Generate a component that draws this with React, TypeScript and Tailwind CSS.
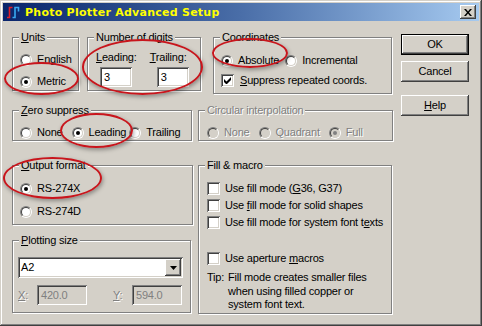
import type { ReactNode } from 'react';

const font = "font-['Liberation_Sans',Arial,sans-serif] text-[11px] leading-[13px] tracking-[-0.2px]";

// classic sunken 2px border (outer dark gray / white, inner black / face)
const sunken =
  'shadow-[inset_1px_1px_0_#808080,inset_-1px_-1px_0_#fff,inset_2px_2px_0_#404040,inset_-2px_-2px_0_#d4d0c8]';
const raised =
  'shadow-[inset_-1px_-1px_0_#404040,inset_1px_1px_0_#fff,inset_-2px_-2px_0_#808080]';

const Radio = ({ checked, disabled }: { checked?: boolean; disabled?: boolean }) => (
  <span className="relative inline-flex w-[12px] h-[12px] shrink-0 rounded-full border border-t-[#808080] border-l-[#808080] border-b-white border-r-white">
    <span
      className={`flex-1 flex items-center justify-center rounded-full border border-t-[#404040] border-l-[#404040] border-b-[#d4d0c8] border-r-[#d4d0c8] ${
        disabled ? 'bg-[#d4d0c8]' : 'bg-white'
      }`}
    >
      {checked && (
        <span className={`w-[4px] h-[4px] rounded-full ${disabled ? 'bg-[#808080]' : 'bg-black'}`} />
      )}
    </span>
  </span>
);

const Check = ({ checked }: { checked?: boolean }) => (
  <span className={`inline-flex w-[13px] h-[13px] shrink-0 bg-white items-center justify-center ${sunken}`}>
    {checked && (
      <svg width="7" height="7" viewBox="0 0 7 7">
        <path d="M0 2v3l2 2h1l4-4V0L2.5 4.5Z" fill="#000" />
      </svg>
    )}
  </span>
);

const U = ({ children }: { children: ReactNode }) => <span className="underline underline-offset-[1px]">{children}</span>;

const Group = ({
  title,
  className,
  children,
  disabled,
}: {
  title: ReactNode;
  className: string;
  children?: ReactNode;
  disabled?: boolean;
}) => (
  <div className={`relative shrink-0 border border-[#808080] shadow-[inset_1px_1px_0_#fff,1px_1px_0_#fff] ${className}`}>
    <span
      className={`absolute -top-[7px] left-[6px] px-[2px] bg-[#d4d0c8] ${
        disabled ? 'text-[#808080] [text-shadow:1px_1px_0_#fff]' : 'text-black'
      }`}
    >
      {title}
    </span>
    {children}
  </div>
);

const Opt = ({
  label,
  checked,
  disabled,
  className = '',
}: {
  label: ReactNode;
  checked?: boolean;
  disabled?: boolean;
  className?: string;
}) => (
  <label className={`flex items-center gap-[5px] ${className}`}>
    <Radio checked={checked} disabled={disabled} />
    <span className={disabled ? 'text-[#808080] [text-shadow:1px_1px_0_#fff]' : ''}>{label}</span>
  </label>
);

const Btn = ({ children, isDefault, className = '' }: { children: ReactNode; isDefault?: boolean; className?: string }) => (
  <button
    className={`w-[68px] h-[21px] bg-[#d4d0c8] flex items-center justify-center ${
      isDefault ? `border border-black ${raised}` : raised
    } ${className}`}
  >
    {children}
  </button>
);

const Field = ({ value, disabled, className = '' }: { value: string; disabled?: boolean; className?: string }) => (
  <div
    className={`h-[20px] flex items-center pl-[4px] ${sunken} ${
      disabled ? 'bg-[#d4d0c8] text-[#808080]' : 'bg-white'
    } ${className}`}
  >
    {value}
  </div>
);

const Ellipse = ({ className }: { className: string }) => (
  <div
    className={`absolute rounded-[50%] border-2 border-[#c8151c] shadow-[1px_2px_4px_rgba(0,0,0,0.35)] pointer-events-none ${className}`}
  />
);

export default function App() {
  return (
    <div
      className={`relative w-[482px] h-[326px] bg-[#d4d0c8] p-[3px] overflow-hidden ${font} shadow-[inset_-1px_-1px_0_#404040,inset_1px_1px_0_#d4d0c8,inset_-2px_-2px_0_#808080,inset_2px_2px_0_#fff]`}
    >
      {/* title bar */}
      <div className="h-[18px] flex items-center bg-gradient-to-r from-[#0a246a] via-[#4a6ea8] to-[#a6caf0] pl-[3px] pr-[3px]">
        <svg width="14" height="14" viewBox="0 0 14 14" className="shrink-0">
          <path d="M1 12.5h2.5V2.5h3" stroke="#e0202a" strokeWidth="1.6" fill="none" />
          <path d="M6.5 12.5h2.5V2.5h3.5v4" stroke="#3aa8f0" strokeWidth="1.6" fill="none" />
        </svg>
        <span className="ml-[5px] font-['DejaVu_Sans',Verdana,sans-serif] font-bold text-[11px] tracking-[0.25px] text-[#ffff00]">
          Photo Plotter Advanced Setup
        </span>
        <button className={`ml-auto w-[16px] h-[14px] bg-[#d4d0c8] flex items-center justify-center ${raised}`}>
          <svg width="8" height="7" viewBox="0 0 8 7">
            <path d="M0 0h2l2 2.5L6 0h2L5 3.5 8 7H6L4 4.5 2 7H0l3-3.5Z" fill="#000" />
          </svg>
        </button>
      </div>

      {/* body */}
      <div className="flex">
        <div className="pl-[9px] pt-[16px] w-[390px]">
          {/* row 1 */}
          <div className="flex items-start">
            <Group title={<><U>U</U>nits</>} className="w-[67px] h-[54px] pl-[7px] pt-[15px]">
              <div className="flex flex-col gap-[9px]">
                <Opt label="English" />
                <Opt label="Metric" checked />
              </div>
            </Group>
            <Group title="Number of digits" className="ml-[8px] w-[114px] h-[54px] pl-[8px] pt-[13px]">
              <div className="flex gap-[13px]">
                <div className="flex flex-col">
                  <span>
                    <U>L</U>eading:
                  </span>
                  <Field value="3" className="ml-[4px] mt-[3px] w-[32px] h-[18px]" />
                </div>
                <div className="flex flex-col">
                  <span>
                    <U>T</U>railing:
                  </span>
                  <Field value="3" className="ml-[7px] mt-[3px] w-[32px] h-[18px]" />
                </div>
              </div>
            </Group>
            <Group title="Coordinates" className="ml-[12px] w-[179px] h-[57px] pl-[7px] pt-[16px]">
              <div className="flex">
                <Opt label="Absolute" checked />
                <Opt label="Incremental" className="ml-[6px]" />
              </div>
              <label className="flex items-center gap-[6px] mt-[7px]">
                <Check checked />
                <span>
                  <U>S</U>uppress repeated coords.
                </span>
              </label>
            </Group>
          </div>

          {/* row 2 */}
          <div className="flex mt-[16px]">
            <Group title={<><U>Z</U>ero suppress</>} className="w-[180px] h-[31px] pl-[7px] pt-[15px]">
              <div className="flex">
                <Opt label="None" />
                <Opt label="Leading" checked className="ml-[9px]" />
                <Opt label="Trailing" className="ml-[3px]" />
              </div>
            </Group>
            <Group title="Circular interpolation" disabled className="ml-[6px] w-[195px] h-[31px] pl-[8px] pt-[15px]">
              <div className="flex">
                <Opt label="None" disabled />
                <Opt label="Quadrant" disabled className="ml-[9px]" />
                <Opt label="Full" checked disabled className="ml-[9px]" />
              </div>
            </Group>
          </div>

          {/* row 3 */}
          <div className="flex mt-[24px] items-start">
            <div className="flex flex-col">
              <Group title={<><U>O</U>utput format</>} className="w-[181px] h-[60px] pl-[7px] pt-[16px]">
                <div className="flex flex-col gap-[10px]">
                  <Opt label="RS-274X" checked />
                  <Opt label="RS-274D" />
                </div>
              </Group>
              <Group title={<><U>P</U>lotting size</>} className="mt-[15px] w-[179px] h-[73px] pl-[5px] pt-[16px]">
                <div className={`w-[165px] h-[21px] bg-white flex items-center pl-[3px] pr-[2px] ${sunken}`}>
                  <span className="flex-1">A2</span>
                  <span className={`w-[16px] h-[17px] bg-[#d4d0c8] flex items-center justify-center ${raised}`}>
                    <svg width="7" height="4" viewBox="0 0 7 4">
                      <path d="M0 0h7L3.5 4Z" fill="#000" />
                    </svg>
                  </span>
                </div>
                <div className="flex items-center mt-[7px]">
                  <span className="w-[19px] text-[#808080] [text-shadow:1px_1px_0_#fff]">
                    <U>X</U>:
                  </span>
                  <Field value="420.0" disabled className="w-[50px]" />
                  <span className="ml-[26px] w-[19px] text-[#808080] [text-shadow:1px_1px_0_#fff]">
                    <U>Y</U>:
                  </span>
                  <Field value="594.0" disabled className="w-[50px]" />
                </div>
              </Group>
            </div>
            <Group title="Fill & macro" className="ml-[5px] w-[194px] h-[149px] pl-[8px] pt-[16px]">
              <div className="flex flex-col gap-[4px]">
                <label className="flex items-center gap-[5px]">
                  <Check />
                  <span>
                    Use fill mode (<U>G</U>36, G37)
                  </span>
                </label>
                <label className="flex items-center gap-[5px]">
                  <Check />
                  <span>
                    Use <U>f</U>ill mode for solid shapes
                  </span>
                </label>
                <label className="flex items-center gap-[5px]">
                  <Check />
                  <span>
                    Use fill mode for system font t<U>e</U>xts
                  </span>
                </label>
                <label className="flex items-center gap-[5px] mt-[19px]">
                  <Check />
                  <span>
                    Use aperture <U>m</U>acros
                  </span>
                </label>
              </div>
              <div className="flex mt-[6px]">
                <span className="w-[21px]">Tip:</span>
                <span className="leading-[13.5px]">
                  Fill mode creates smaller files
                  <br />
                  when using filled copper or
                  <br />
                  system font text.
                </span>
              </div>
            </Group>
          </div>
        </div>

        {/* buttons */}
        <div className="ml-[8px] pt-[13px] flex flex-col">
          <Btn isDefault>OK</Btn>
          <Btn className="mt-[6px]">Cancel</Btn>
          <Btn className="mt-[13px]">
            <span>
              <U>H</U>elp
            </span>
          </Btn>
        </div>
      </div>

      {/* red markup ellipses */}
      <Ellipse className="left-[4px] top-[62px] w-[75px] h-[33px]" />
      <Ellipse className="left-[82px] top-[39px] w-[121px] h-[56px]" />
      <Ellipse className="left-[212px] top-[38px] w-[76px] h-[30px]" />
      <Ellipse className="left-[60px] top-[113px] w-[73px] h-[35px]" />
      <Ellipse className="left-[3px] top-[157px] w-[99px] h-[42px]" />
    </div>
  );
}
